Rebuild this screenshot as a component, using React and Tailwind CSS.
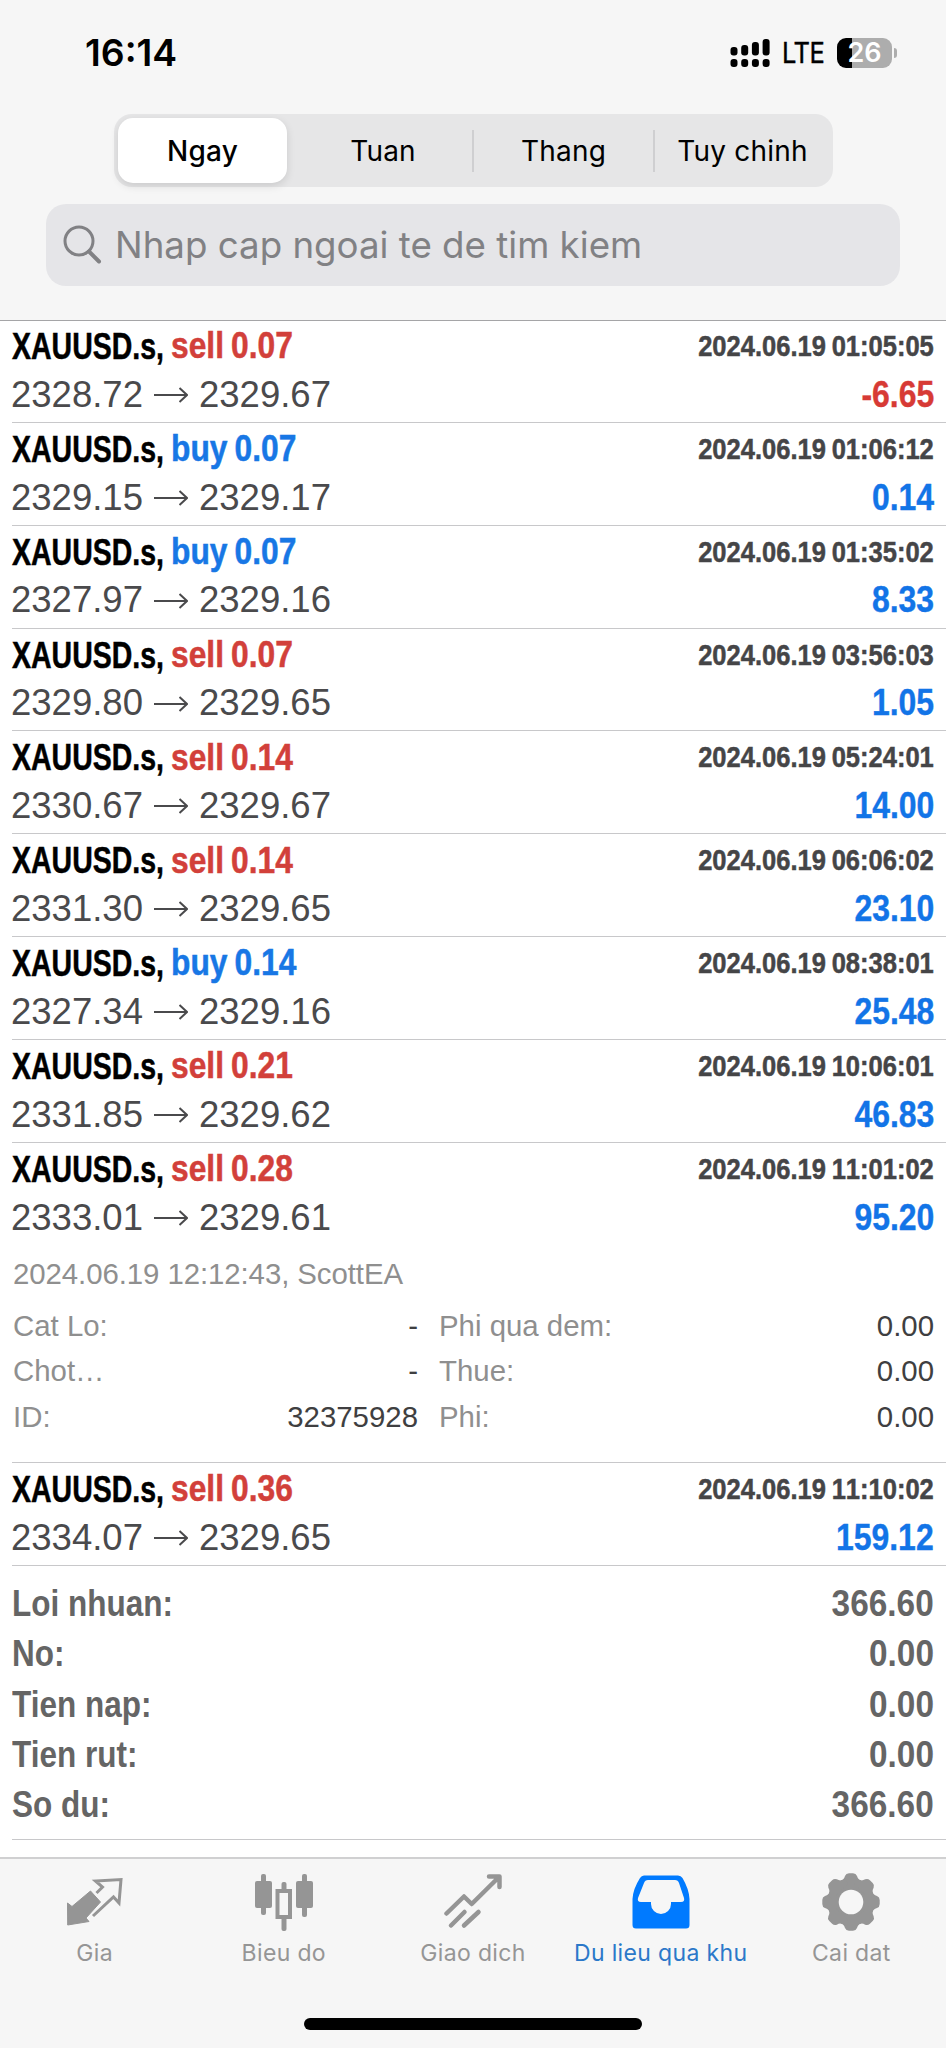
const deals = [
  { side: 'sell', lot: '0.07', open: '2328.72', close: '2329.67', time: '2024.06.19 01:05:05', profit: '-6.65' },
  { side: 'buy', lot: '0.07', open: '2329.15', close: '2329.17', time: '2024.06.19 01:06:12', profit: '0.14' },
  { side: 'buy', lot: '0.07', open: '2327.97', close: '2329.16', time: '2024.06.19 01:35:02', profit: '8.33' },
  { side: 'sell', lot: '0.07', open: '2329.80', close: '2329.65', time: '2024.06.19 03:56:03', profit: '1.05' },
  { side: 'sell', lot: '0.14', open: '2330.67', close: '2329.67', time: '2024.06.19 05:24:01', profit: '14.00' },
  { side: 'sell', lot: '0.14', open: '2331.30', close: '2329.65', time: '2024.06.19 06:06:02', profit: '23.10' },
  { side: 'buy', lot: '0.14', open: '2327.34', close: '2329.16', time: '2024.06.19 08:38:01', profit: '25.48' },
  { side: 'sell', lot: '0.21', open: '2331.85', close: '2329.62', time: '2024.06.19 10:06:01', profit: '46.83' },
  { side: 'sell', lot: '0.28', open: '2333.01', close: '2329.61', time: '2024.06.19 11:01:02', profit: '95.20', expanded: true },
  { side: 'sell', lot: '0.36', open: '2334.07', close: '2329.65', time: '2024.06.19 11:10:02', profit: '159.12' },
];

const details = [
  ['Cat Lo:', '-', 'Phi qua dem:', '0.00'],
  ['Chot…', '-', 'Thue:', '0.00'],
  ['ID:', '32375928', 'Phi:', '0.00'],
];

const totals = [
  ['Loi nhuan:', '366.60'],
  ['No:', '0.00'],
  ['Tien nap:', '0.00'],
  ['Tien rut:', '0.00'],
  ['So du:', '366.60'],
];

function StatusBar() {
  return (
    <div className="flex h-[105px] items-center justify-between pl-[85px] pr-[49px]">
      <span className="text-[37.300px] font-semibold leading-none">16:14</span>
      <div className="flex items-center">
        <svg width="40" height="30" viewBox="0 0 40 30">
          <rect x="0.5" y="9" width="7" height="8.5" rx="3" />
          <rect x="11.2" y="7" width="7" height="10.5" rx="3" />
          <rect x="21.9" y="4" width="7" height="13.5" rx="3" />
          <rect x="32.6" y="1" width="7" height="16.5" rx="3" />
          <rect x="0.5" y="21" width="7" height="8" rx="3" />
          <rect x="11.2" y="21" width="7" height="8" rx="3" />
          <rect x="21.9" y="21" width="7" height="8" rx="3" />
          <rect x="32.6" y="21" width="7" height="8" rx="3" />
        </svg>
        <span className="ml-3 w-[43px] origin-left scale-x-[0.91] text-[28px] leading-none tracking-[-0.5px] [-webkit-text-stroke:0.4px]">LTE</span>
        <div className="ml-3 flex h-[30px] w-[55px] items-center justify-center rounded-[9px] bg-[linear-gradient(90deg,#000_15px,#adadad_15px)] text-[27px] font-semibold leading-none text-white">
          26
        </div>
        <div className="ml-[2px] h-[10px] w-[3px] rounded-r-full bg-[#adadad]" />
      </div>
    </div>
  );
}

function PeriodTabs() {
  return (
    <div className="ml-[114px] flex h-[73px] w-[719px] items-center rounded-[18px] bg-[#e6e6e7] p-1 text-[28px] tracking-[0.2px]">
      <button className="h-[65px] w-[169px] rounded-[15px] bg-white font-medium shadow-[0_3px_8px_rgba(0,0,0,0.12)]">Ngay</button>
      <button className="w-[185px] pl-[7px]">Tuan</button>
      <button className="h-[42px] w-[181px] border-l-2 border-[#cfcfd1]">Thang</button>
      <button className="h-[42px] flex-1 whitespace-nowrap border-l-2 border-[#cfcfd1] pl-px">Tuy chinh</button>
    </div>
  );
}

function SearchField() {
  return (
    <div className="mx-[46px] mt-[17px] flex h-[82px] items-center rounded-[20px] bg-[#e5e5e8] pl-[17px] text-[#818184]">
      <svg width="40" height="40" viewBox="0 0 40 40" fill="none" stroke="currentColor">
        <circle cx="16" cy="16" r="14" strokeWidth="3" />
        <path d="M26 26.5L36 36.5" strokeWidth="4" strokeLinecap="round" />
      </svg>
      <span className="ml-3 text-[36.700px]">Nhap cap ngoai te de tim kiem</span>
    </div>
  );
}

function DealDetails() {
  return (
    <div className="pl-px pr-3 text-[29.400px] leading-[45.800px] text-[#8f8f8f]">
      <div className="mb-[6px] mt-[11px] tracking-[-0.080px]">2024.06.19 12:12:43, ScottEA</div>
      {details.map(([label, value, feeLabel, fee]) => (
        <div key={label} className="flex">
          <span className="w-[200px]">{label}</span>
          <span className="w-[205px] text-right text-[#3f3f41]">{value}</span>
          <span className="ml-[21px] flex-1">{feeLabel}</span>
          <span className="text-[#3f3f41]">{fee}</span>
        </div>
      ))}
    </div>
  );
}

function Deal({ deal }) {
  const sideColor = deal.side === 'sell' ? 'text-[#d2403a]' : 'text-[#1877e5]';
  const profitColor = deal.profit.startsWith('-') ? 'text-[#d73a35]' : 'text-[#1274e7]';

  return (
    <div className={`border-b border-[#c8c8ca] ${deal.expanded ? 'h-[320px]' : 'h-[102.860px]'}`}>
      <div className="flex h-[51px] items-center pr-3 pt-[2px] font-bold leading-none [-webkit-text-stroke:0.5px]">
        <span className="w-[159px] origin-left scale-x-[0.77] whitespace-nowrap text-[37px]">XAUUSD.s,</span>
        <span className={`flex-1 origin-left scale-x-[0.87] whitespace-nowrap text-[36.500px] [word-spacing:-2px] ${sideColor}`}>
          {deal.side} {deal.lot}
        </span>
        <span className="origin-right scale-x-[0.88] whitespace-nowrap text-[29px] text-[#454547] [font-kerning:none] [word-spacing:-1.500px]">
          {deal.time}
        </span>
      </div>
      <div className="-ml-px flex h-[46px] items-center pr-3 pt-[2px] text-[36.500px] leading-none">
        <span className="w-[132px] text-[#4a4a4c]">{deal.open}</span>
        <svg className="mx-[11px]" width="34" height="16" viewBox="0 0 34 16" fill="none" stroke="#4a4a4c" strokeWidth="2">
          <path d="M0 8H33M25.5 1L33 8L25.5 15" />
        </svg>
        <span className="flex-1 text-[#4a4a4c]">{deal.close}</span>
        <span className={`origin-right scale-x-[0.875] font-bold [-webkit-text-stroke:0.4px] ${profitColor}`}>{deal.profit}</span>
      </div>
      {deal.expanded && <DealDetails />}
    </div>
  );
}

function QuotesIcon() {
  return (
    <svg width="56" height="50" viewBox="0 0 56 50">
      <path d="M23.5 14L33.5 25L19 41L22 44.5L0.7 48L0.5 26L5 29.5Z" fill="#959595" stroke="#959595" strokeLinejoin="round" />
      <path d="M29.5 16L35.5 10L28.5 4L54 2.5L52 26L46.5 20L26 39" fill="none" stroke="#959595" strokeWidth="3" />
    </svg>
  );
}

function ChartIcon() {
  return (
    <svg width="58" height="57" viewBox="0 0 58 57" fill="#959595">
      <rect x="6" y="0" width="5" height="41" rx="2" />
      <rect x="0" y="7" width="17" height="27" rx="2" />
      <rect x="47" y="0" width="5" height="43" rx="2" />
      <rect x="41" y="7" width="17" height="27" rx="2" />
      <rect x="26.5" y="8" width="5" height="10" rx="2" />
      <rect x="26.5" y="43" width="5" height="14" rx="2" />
      <rect x="22.5" y="17" width="12.5" height="26" fill="none" stroke="#959595" strokeWidth="4" />
    </svg>
  );
}

function TradeIcon() {
  return (
    <svg width="58" height="56" viewBox="0 0 58 56" fill="none" stroke="#959595" strokeWidth="4.5" strokeLinecap="round" strokeLinejoin="round">
      <path d="M2.5 39.5L20 22.5L27.7 30L54.5 3.5M45 2.5H55.5V13" />
      <path d="M7 51.5L20.5 38M20 51.5L34.5 38" />
    </svg>
  );
}

function HistoryIcon() {
  return (
    <svg width="58" height="54" viewBox="0 0 58 54">
      <path
        fill="#007aff"
        fillRule="evenodd"
        d="M12 0.5H46Q49 0.5 50.5 3Q57 14 57.5 24V50Q57.5 53.5 54 53.5H4Q0.5 53.5 0.5 50V24Q1 14 8 3Q9.5 0.5 12 0.5ZM16 5Q13 5 12 8L6 23Q5 27 9 27H19V29A10 10 0 0 0 39 29V27H49Q53 27 52 23L47 8Q46 5 43 5Z"
      />
    </svg>
  );
}

function SettingsIcon() {
  return (
    <svg width="58" height="58" viewBox="0 0 58 58" fill="#959595">
      <circle cx="29" cy="29" r="23.5" />
      {[0, 45, 90, 135, 180, 225, 270, 315].map((angle) => (
        <path key={angle} transform={`rotate(${angle} 29 29)`} d="M18 8Q22 7 23 3Q24 0.3 27 0.3H31Q34 0.3 35 3Q36 7 40 8V14H18Z" />
      ))}
      <circle cx="29" cy="29" r="12.3" fill="#f6f6f6" />
    </svg>
  );
}

const tabs = [
  { label: 'Gia', Icon: QuotesIcon },
  { label: 'Bieu do', Icon: ChartIcon },
  { label: 'Giao dich', Icon: TradeIcon },
  { label: 'Du lieu qua khu', Icon: HistoryIcon, active: true },
  { label: 'Cai dat', Icon: SettingsIcon },
];

export default function App() {
  return (
    <div className="flex h-[2048px] w-[946px] flex-col overflow-hidden bg-white font-['Inter','Liberation_Sans',sans-serif] text-black">
      <header className="h-[321px] border-b border-[#a5a5a7] bg-[#f6f6f6]">
        <StatusBar />
        <div className="pt-[9px]">
          <PeriodTabs />
          <SearchField />
        </div>
      </header>

      <main className="-mt-px flex-1 pl-3 font-['Liberation_Sans',Arial,sans-serif]">
        {deals.map((deal) => (
          <Deal key={deal.time} deal={deal} />
        ))}
        <div className="h-[274px] border-b border-[#c8c8ca] pr-3 pt-3 text-[37.500px] font-bold leading-[50.400px] text-[#656565]">
          {totals.map(([label, value]) => (
            <div key={label} className="flex justify-between">
              <span className="origin-left scale-x-[0.84]">{label}</span>
              <span className="origin-right scale-x-[0.89]">{value}</span>
            </div>
          ))}
        </div>
      </main>

      <footer className="h-[191px] border-t-2 border-[#d0d0d1] bg-[#f6f6f6]">
        <nav className="flex h-[159px]">
          {tabs.map(({ label, Icon, active }) => (
            <div
              key={label}
              className={`flex w-1/5 flex-col items-center pt-[14px] text-[23px] ${active ? 'pr-[3px] text-[#2b78c9]' : 'text-[#959595]'}`}
            >
              <div className="flex h-[58px] items-center">
                <Icon />
              </div>
              <span className="mt-[5px] whitespace-nowrap tracking-[0.35px]">{label}</span>
            </div>
          ))}
        </nav>
        <div className="mx-auto h-3 w-[338px] rounded-full bg-black" />
      </footer>
    </div>
  );
}
